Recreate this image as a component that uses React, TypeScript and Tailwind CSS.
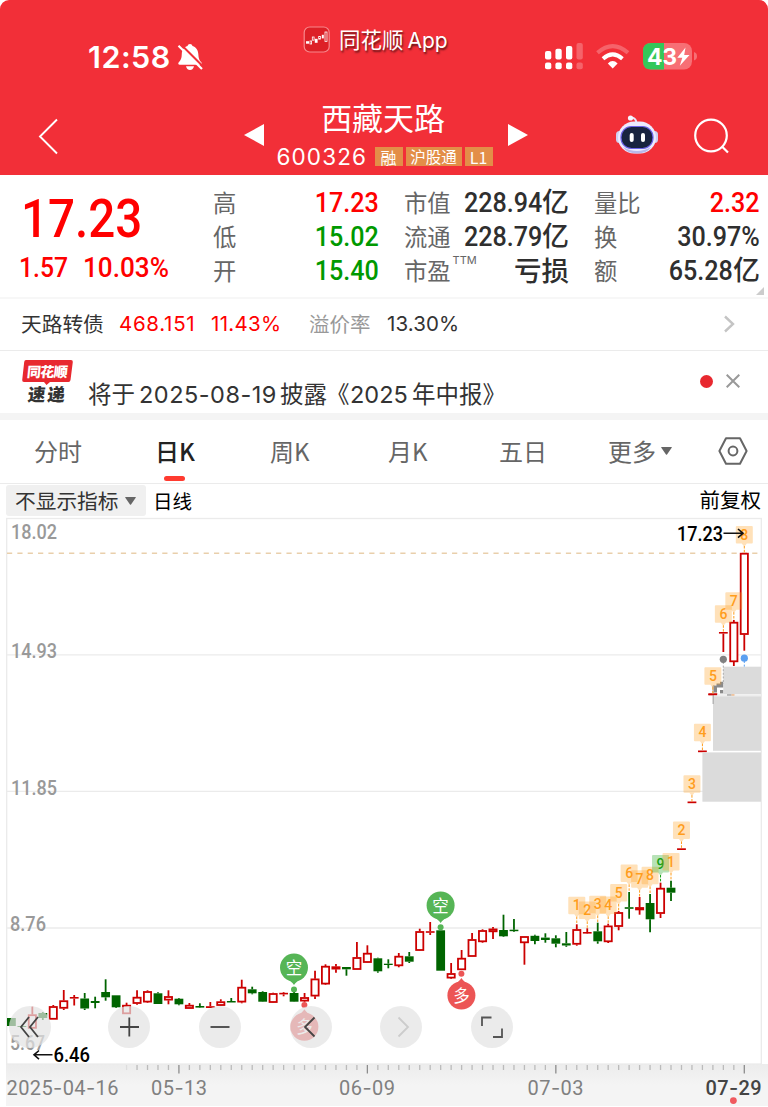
import type { ReactNode } from "react";

// [body top, body bottom, high, low, up]
type Candle = [number, number, number, number, boolean];

const candles: Candle[] = [
    [1018, 1026, 1018, 1026, false],
    [1026, 1027, 1025, 1027, false],
    [1014.5, 1028.5, 1006.7, 1028.5, true],
    [1013, 1018, 1012, 1020, false],
    [1006.3, 1019.5, 1005, 1019.5, true],
    [1000.5, 1008.5, 990, 1010, true],
    [997, 998.6, 995, 1005.5, true],
    [998.5, 1008.5, 993, 1010, false],
    [1001, 1003, 996.7, 1008.3, false],
    [992, 997.3, 979.3, 1000.7, false],
    [995.3, 1007.3, 995.3, 1008, false],
    [1005, 1014, 1002.7, 1014, true],
    [997, 1003.7, 990.3, 1004.7, true],
    [991.3, 1002.3, 990.3, 1003, true],
    [993.3, 1004, 992.3, 1004, false],
    [996.3, 1000.3, 990.3, 1004.3, true],
    [998.7, 1004.3, 998, 1005.3, false],
    [1005, 1008.7, 1003, 1008.7, true],
    [1006, 1007.6, 1003.3, 1008, false],
    [1006.2, 1008, 1002, 1008, true],
    [1001.5, 1005.7, 999.3, 1006, true],
    [1001, 1002.5, 998, 1002.5, false],
    [987, 1002.3, 979.7, 1003.3, true],
    [989.3, 993.3, 986.7, 994.3, false],
    [992, 1001.7, 991.3, 1002, false],
    [993.3, 1002.7, 992.7, 1003, true],
    [992.8, 994.4, 992, 996.3, true],
    [993, 1001.7, 992, 1002, false],
    [997.3, 1001.3, 993, 1002, true],
    [978.7, 996.3, 970.7, 999, true],
    [966, 984.3, 964.3, 985, true],
    [966.5, 969.3, 964, 972.7, true],
    [967, 969.3, 967, 975.7, false],
    [957.3, 969.7, 942, 969.7, true],
    [953, 962.7, 945.3, 963, true],
    [958.3, 971.3, 957.7, 972.7, false],
    [963.7, 965, 959.3, 968.3, false],
    [956, 966, 953, 967.3, true],
    [956.3, 961.7, 952, 963, false],
    [931.3, 950.7, 928.7, 951, true],
    [931.2, 932.8, 922, 935, true],
    [930.3, 970.7, 930.3, 970.7, false],
    [973.3, 978.3, 963, 979, true],
    [958, 970, 950, 970, true],
    [939.3, 956.7, 933, 956.7, true],
    [930.3, 942, 929.3, 942.7, true],
    [928.7, 932, 927, 939, true],
    [930, 936.3, 914.7, 937, false],
    [929.7, 931.2, 919, 932, false],
    [936.3, 943, 936.3, 964.7, true],
    [935.8, 941, 934.7, 944.3, false],
    [937.6, 940, 933.3, 942.7, false],
    [938.3, 943.7, 935.3, 947.3, false],
    [943.3, 945.5, 932, 946.8, false],
    [929.3, 944.5, 924.3, 945.7, true],
    [932, 933.6, 928.3, 934, true],
    [931.3, 941.3, 922.7, 943.7, false],
    [925.7, 942, 923.7, 943, true],
    [912.3, 926.7, 911, 930.3, true],
    [907.2, 908.8, 892, 918.7, false],
    [907.3, 910, 897, 914.7, true],
    [903, 919.3, 894, 932.3, false],
    [888, 913.7, 882.7, 918, true],
    [887.7, 892.7, 880.7, 901, false],
    [848.3, 850, 848.3, 850, true],
    [801.5, 803.2, 801.5, 803.2, true],
    [750.5, 752.2, 750.5, 752.2, true],
    [693.5, 695.2, 693.5, 695.2, true],
    [632, 633.6, 632, 652, true],
    [622, 662, 620, 666, true],
    [553, 634.7, 553, 650.7, true],
];

// [candle index, label, top of the tag]
const tags: [number, string, number][] = [
    [54, "1", 896.7],
    [55, "2", 901.5],
    [56, "3", 895.7],
    [57, "4", 896.5],
    [58, "5", 884],
    [59, "6", 864.5],
    [60, "7", 870.2],
    [61, "8", 866.7],
    [62, "9", 855],
    [63, "1", 853],
    [64, "2", 821.5],
    [65, "3", 775.2],
    [66, "4", 723.7],
    [67, "5", 667.2],
    [68, "6", 605.3],
    [69, "7", 592.2],
    [70, "8", 526],
];

const candleX = (i: number) => 11.4 + i * 10.47;

const CandleMark = ({ i, data }: { i: number; data: Candle }) => {
    const [top, bottom, high, low, up] = data;
    const x = candleX(i);
    const color = up ? "#cc0000" : "#006400";
    const hollow = up && bottom - top > 2;
    return (
        <g stroke={color} strokeWidth={1.8}>
            {high < top && <line x1={x} x2={x} y1={high} y2={top} />}
            {low > bottom && <line x1={x} x2={x} y1={bottom} y2={low} />}
            {hollow ? (
                <rect x={x - 3.6} y={top + 0.7} width={7.2} height={Math.max(bottom - top - 1.4, 1.4)} fill="#fff" />
            ) : (
                <rect x={x - 4.4} y={top} width={8.8} height={bottom - top} fill={color} stroke="none" />
            )}
        </g>
    );
};

const Tag = ({ i, label, y }: { i: number; label: string; y: number }) => {
    const x = candleX(i);
    const color = label === "9" ? "#16a016" : "#ff9d1c";
    return (
        <g>
            <path
                d={`M${x - 7.5} ${y}h15q1 0 1 1v15.5q0 1 -1 1h-5l-2.5 3.2l-2.5 -3.2h-5q-1 0 -1 -1v-15.5q0 -1 1 -1z`}
                fill={color}
                fillOpacity={0.31}
            />
            <line x1={x} x2={x} y1={y + 20} y2={candles[i][2]} stroke={color} strokeWidth={1} strokeDasharray="2.5 1.3" />
            <text x={x} y={y + 13.6} textAnchor="middle" fontSize={14} fontWeight={500} fill={color}>
                {label}
            </text>
        </g>
    );
};

const Signal = ({ x, y, down, label }: { x: number; y: number; down?: boolean; label: string }) => {
    const color = down ? "#56b556" : "#ec5555";
    const s = down ? 1 : -1;
    return (
        <g fill={color}>
            <circle cx={x} cy={y} r={14} />
            <path d={`M${x - 9} ${y + 10 * s}Q${x - 2} ${y + 14 * s} ${x} ${y + 17.5 * s}Q${x + 2} ${y + 14 * s} ${x + 9} ${y + 10 * s}z`} />
            <circle cx={x} cy={y + 21.8 * s} r={3} />
            <text x={x} y={y + 6} textAnchor="middle" fontSize={16.5} fill="#fff" className="font-['Noto_Sans_CJK_SC',sans-serif]">
                {label}
            </text>
        </g>
    );
};

const DateLabel = ({ x, width, children, dark }: { x: number; width: number; children: string; dark?: boolean }) => (
    <text x={x} y={1095} textLength={width} fontSize={20} fontWeight={dark ? 500 : 400} fill={dark ? "#444" : "#808080"}>
        {children.split("-").map((part, i) => (
            <tspan key={i}>
                {i > 0 && <tspan className="font-[Inter,sans-serif]">-</tspan>}
                {part}
            </tspan>
        ))}
    </text>
);

const Chart = () => (
    <svg viewBox="0 517 768 590" className="block h-[590px] w-[768px] font-[Roboto,sans-serif]">
        <defs>
            <linearGradient id="axis" x1="0" x2="0" y1="0" y2="1">
                <stop offset="0" stopColor="#ececec" />
                <stop offset="0.5" stopColor="#f4f4f4" />
            </linearGradient>
        </defs>
        <rect x={6} y={1064} width={762} height={42} fill="url(#axis)" />
        <g stroke="#ebebeb" strokeWidth={1.3}>
            <rect x={6.7} y={518.5} width={754.6} height={545.5} fill="#fff" />
            <path d="M7 654.8H761M7 791.3H761M7 928H761" />
        </g>
        <line x1={7} x2={761} y1={553.3} y2={553.3} stroke="#e9cfab" strokeWidth={1.5} strokeDasharray="5.2 5.15" />
        <g fontSize={19.5} fontWeight={500} fill="#999">
            <text x={11} y={538.7} textLength={46} lengthAdjust="spacingAndGlyphs">18.02</text>
            <text x={11} y={657.7} textLength={46} lengthAdjust="spacingAndGlyphs">14.93</text>
            <text x={11} y={794.5} textLength={46} lengthAdjust="spacingAndGlyphs">11.85</text>
            <text x={10} y={931.3} textLength={36} lengthAdjust="spacingAndGlyphs">8.76</text>
            <text x={10} y={1050} textLength={35} lengthAdjust="spacingAndGlyphs">5.67</text>
        </g>
        {candles.map((c, i) => (
            <CandleMark key={i} i={i} data={c} />
        ))}

        {/* masked fund flow area */}
        <path d="M712.8 692.5V685.5H716.5V683.5H720V681.7H723.4V687.5H717V692.5z" fill="#8a8a8a" />
        <rect x={720} y={690} width={3.4} height={3.4} fill="#8a8a8a" />
        <g fill="#dbdbdb">
            <rect x={723.3} y={666.7} width={37.7} height={27.4} />
            <rect x={713} y={696.2} width={48} height={54.6} />
            <rect x={702.4} y={752.4} width={58.6} height={49.3} />
        </g>
        <rect x={713} y={694.2} width={48} height={2} fill="#eee" />
        <rect x={727} y={694.2} width={4.5} height={1.5} fill="#aaa" />
        <rect x={731.5} y={694.2} width={3} height={1.5} fill="#f0b98a" />
        <rect x={712.5} y={686} width={1.5} height={18} fill="#b5b5b5" />
        <rect x={708.3} y={693.5} width={8.8} height={1.7} fill="#cc0000" />
        <line x1={723.3} x2={723.3} y1={662} y2={684} stroke="#aaa" strokeDasharray="2 1.6" />
        <circle cx={723.3} cy={659.3} r={3.6} fill="#808080" />
        <line x1={744.3} x2={744.3} y1={661} y2={667} stroke="#5a9ff0" strokeDasharray="2 1.6" />
        <circle cx={744.3} cy={658.2} r={3.6} fill="#5a9ff0" />

        {tags.map(([i, label, y]) => (
            <Tag key={i} i={i} label={label} y={y} />
        ))}
        <Signal x={294} y={967.6} down label="空" />
        <Signal x={304.4} y={1026.8} label="多" />
        <Signal x={440.6} y={905.5} down label="空" />
        <Signal x={461.4} y={995.5} label="多" />

        <g fontSize={20} fontWeight={500} fill="#000">
            <text x={677} y={540.6} textLength={46} lengthAdjust="spacingAndGlyphs">17.23</text>
            <text x={53.5} y={1061.8} textLength={36.5} lengthAdjust="spacingAndGlyphs">6.46</text>
        </g>
        <path d="M723.5 533.3H743M738 529L743 533.3L738 537.6M52.5 1054.8H34M39 1050.5L34 1054.8L39 1059.1" fill="none" stroke="#111" strokeWidth={1.6} />

        {/* time axis */}
        {candles.map((_, i) => {
            if (i < 11) return null;
            const major = (i - 16) % 18 === 0;
            return (
                <line
                    key={i}
                    x1={candleX(i)}
                    x2={candleX(i)}
                    y1={1065}
                    y2={major ? 1073.5 : 1070}
                    stroke={major ? "#8c8c8c" : i === 11 ? "#ddd" : "#bbb"}
                    strokeWidth={1.3}
                />
            );
        })}
        <DateLabel x={6.5} width={112}>2025-04-16</DateLabel>
        <DateLabel x={151} width={56}>05-13</DateLabel>
        <DateLabel x={339} width={56}>06-09</DateLabel>
        <DateLabel x={527.5} width={56}>07-03</DateLabel>
        <DateLabel x={705.5} width={56} dark>07-29</DateLabel>
        <circle cx={733.4} cy={1100.6} r={3.4} fill="#f05a5f" />
    </svg>
);

const chartButtons = [
    { left: "left-[9px]", path: "M20 11L12 21L20 31M29 11L21 21L29 31", color: "#444" },
    { left: "left-[108px]", path: "M12 21H31M21.3 11.5V30.5", color: "#444" },
    { left: "left-[199px]", path: "M11.5 21H30.5", color: "#444" },
    { left: "left-[290px]", path: "M24.5 11.5L15 21L24.5 30.5", color: "#444" },
    { left: "left-[380px]", path: "M18.5 11.5L28 21L18.5 30.5", color: "#ccc" },
    { left: "left-[471px]", path: "M11 20V11.5H20.5M31 22.5V31H22", color: "#555" },
];

const ChartButtons = () => (
    <>
        {chartButtons.map((b) => (
            <button key={b.left} className={`absolute top-[488.5px] size-[42px] rounded-full bg-[#e2e2e2]/70 ${b.left}`}>
                <svg viewBox="0 0 42 42" className="size-full" fill="none" stroke={b.color} strokeWidth={1.8}>
                    <path d={b.path} />
                </svg>
            </button>
        ))}
    </>
);

const StatusBar = () => (
    <div className="flex h-[84px] items-start text-white">
        <div className="mt-[37px] ml-[88px] w-[88px] whitespace-nowrap font-[Inter,sans-serif] text-[30.5px] leading-[40px] font-semibold tracking-[0.5px]">12:58</div>
        <svg className="mt-[42px] h-[30px] w-[28px]" viewBox="176 42 28 30" fill="#fff">
            <path d="M190 44c1.3 0 2.2 .8 2.5 1.9c4 1.2 5.6 4.5 5.8 8.1c.2 4.5 1.2 6.5 3 8.3c.8 1 .4 2.5 -1 2.5h-20.5c-1.5 0 -2 -1.5 -1 -2.5c1.9 -1.8 2.9 -3.9 3 -8.3c.1 -3.6 1.7 -6.9 5.7 -8.1c.3 -1.1 1.2 -1.9 2.5 -1.9z" />
            <path d="M186 66.3h8q-.8 3.7 -4 3.7t-4 -3.7z" />
            <path d="M180.5 44L204 67.5" stroke="#f22f38" strokeWidth={2} />
            <path d="M178.5 45.8L202 69" stroke="#fff" strokeWidth={2.2} />
        </svg>
        <svg className="mt-[26px] ml-[99px] size-[27px]" viewBox="303 26 27 27">
            <rect x={304.2} y={27} width={25} height={25} rx={5.5} fill="#dd2027" stroke="#f7888c" strokeWidth={1.2} />
            <g fill="#fff">
                <rect x={306} y={41.2} width={3} height={2.5} />
                <rect x={314.8} y={38.8} width={2.8} height={4} />
                <rect x={321.8} y={34.8} width={2} height={3.6} />
            </g>
            <g fill="none" stroke="#fff" strokeWidth={0.8}>
                <rect x={310} y={41} width={1.6} height={3} />
                <rect x={312.3} y={37} width={1.8} height={3.2} />
                <rect x={318.7} y={36.5} width={1.8} height={2.6} />
                <rect x={325} y={32} width={2} height={9.5} />
            </g>
        </svg>
        <div className="mt-[24px] ml-[9px] flex w-[204px] items-baseline gap-[4px] whitespace-nowrap font-[Inter,'Noto_Sans_CJK_SC',sans-serif] text-[21.5px] leading-[32px] [text-shadow:1px_2px_2px_rgba(0,0,0,0.6)]">
            <span>同花顺</span>
            <span className="text-[21px]">App</span>
        </div>
        <svg className="mt-[40px] h-[32px] w-[156px]" viewBox="543 40 156 32">
            <g fill="#fff">
                <rect x={545} y={51} width={6.3} height={8.5} rx={2} />
                <rect x={555.4} y={48.7} width={6.3} height={10.8} rx={2} />
                <rect x={566} y={46} width={6.3} height={13.5} rx={2} />
                <rect x={545} y={62.5} width={6.3} height={6.8} rx={2} />
                <rect x={555.4} y={62.5} width={6.3} height={6.8} rx={2} />
                <rect x={566} y={62.5} width={6.3} height={6.8} rx={2} />
                <g opacity={0.25}>
                    <rect x={576.5} y={43} width={6.3} height={16.5} rx={2} />
                    <rect x={576.5} y={62.5} width={6.3} height={6.8} rx={2} />
                </g>
                <path d="M612.7 68.5L607.8 63.4Q612.7 58.8 617.6 63.4Z" />
            </g>
            <g fill="none" stroke="#fff" strokeWidth={4}>
                <path d="M603 58.7Q612.7 50.2 622.4 58.7" />
                <path d="M597.5 52.8Q612.7 39.5 628 52.8" opacity={0.25} />
            </g>
            <rect x={643} y={43} width={49} height={26.5} rx={8} fill="#f76f75" />
            <path d="M664 43h-13q-8 0 -8 8v10.5q0 8 8 8h13z" fill="#34c759" />
            <path d="M694 52q3 1 3 4.2t-3 4.2z" fill="#f76f75" />
            <text x={647} y={64.8} fontSize={23} fontWeight={700} fill="#fff" textLength={30} className="font-[Inter,sans-serif]">43</text>
            <path d="M685.5 47.5L677.3 57.8h5l-2.5 8L689.5 55h-5.3z" fill="#fff" />
        </svg>
    </div>
);

const Robot = () => (
    <svg className="h-[42px] w-[44px]" viewBox="0 0 44 42">
        <path d="M15 4q6 -1 6.5 5" fill="none" stroke="#e8e4f8" strokeWidth={2} />
        <circle cx={15.5} cy={4} r={2.6} fill="#f6f4ff" />
        <rect x={1} y={17} width={7} height={12} rx={3.5} fill="#cfd0f0" />
        <rect x={36} y={17} width={7} height={12} rx={3.5} fill="#cfd0f0" />
        <rect x={3} y={7.5} width={38} height={32} rx={16} fill="#eceaff" />
        <path d="M8 33q14 8 28 0q-4 6.5 -14 6.5t-14 -6.5z" fill="#b9b8ea" />
        <rect x={6} y={12.5} width={32} height={22} rx={10.5} fill="#18233f" stroke="#6b62e8" strokeWidth={1.2} />
        <rect x={14.7} y={19} width={4} height={9} rx={2} fill="#fff" />
        <rect x={26} y={19} width={4} height={9} rx={2} fill="#fff" />
    </svg>
);

const Header = () => (
    <header className="h-[175px] rounded-t-[9px] bg-[#f22f38]">
        <StatusBar />
        <div className="flex h-[91px] text-white">
            <svg className="mt-[34px] ml-[38px] h-[37px] w-[20px]" viewBox="0 0 20 37" fill="none" stroke="#fff" strokeWidth={1.9}>
                <path d="M19 1.5L2 18.5L19 35.5" />
            </svg>
            <svg className="mt-[40px] ml-[186px] h-[22px] w-[20px]" viewBox="0 0 20 22" fill="#fff">
                <path d="M20 0V22L0 11z" />
            </svg>
            <div className="flex w-[244px] flex-col items-center pr-[4px] font-['Noto_Sans_CJK_SC',sans-serif]">
                <h1 className="mt-[13px] mr-[2px] h-[43px] text-[31px] leading-[40px] -tracking-[0.1px]">西藏天路</h1>
                <div className="flex items-center gap-[3px]">
                    <span className="mt-px w-[96px] pl-px font-[Inter,sans-serif] text-[22.5px] leading-[32px] tracking-[1.1px]">600326</span>
                    <span className="flex h-[19px] w-[28px] items-center justify-center bg-[#e38e48] text-[16px]">融</span>
                    <span className="flex h-[19px] w-[56px] items-center justify-center bg-[#e38e48] text-[15.5px]">沪股通</span>
                    <span className="flex h-[19px] w-[28px] items-center justify-center bg-[#e38e48] text-[16px]">L1</span>
                </div>
            </div>
            <svg className="mt-[40px] h-[22px] w-[20px]" viewBox="0 0 20 22" fill="#fff">
                <path d="M0 0V22L20 11z" />
            </svg>
            <div className="mt-[30px] ml-[87px]">
                <Robot />
            </div>
            <svg className="mt-[34px] ml-[34px] h-[37px] w-[37px]" viewBox="0 0 37 37" fill="none" stroke="#fff" strokeWidth={2.2}>
                <circle cx={18} cy={17.5} r={15.8} />
                <path d="M29 28.5L35 34.5" />
            </svg>
        </div>
    </header>
);

const Row = ({ label, children, color = "text-[#2f2f2f]", sup }: { label: string; children: ReactNode; color?: string; sup?: string }) => (
    <div className="flex h-[34px] items-center justify-between whitespace-nowrap">
        <span className="mb-[3px] flex text-[23.3px] leading-[34px] text-[#666]">
            {label}
            {sup && <sup className="top-[2px] ml-[2px] font-[Inter,sans-serif] text-[11px] leading-none">{sup}</sup>}
        </span>
        <span className={`flex items-center font-medium ${color}`}>{children}</span>
    </div>
);

const Num = ({ children }: { children: string }) => (
    <span className="inline-block origin-right scale-x-[0.93] font-[Roboto,sans-serif] text-[27px] leading-[34px]">{children}</span>
);

const Yi = () => <span className="mb-[4px] text-[27px] leading-[26px]">亿</span>;

const Quote = () => (
    <section className="flex h-[124px] border-b-2 border-[#f7f7f7] pt-[11px]">
        <div className="w-[213px] whitespace-nowrap font-[Roboto,sans-serif] font-medium text-[#ff0000]">
            <div className="ml-[21px] h-[67px] origin-left scale-x-[0.88] text-[54px] leading-[66px]">17.23</div>
            <div className="ml-[19px] flex text-[27.5px] leading-[30px]">
                <span className="w-[64px] origin-left scale-x-[0.9]">1.57</span>
                <span className="origin-left scale-x-[0.95]">10.03%</span>
            </div>
        </div>
        <div className="w-[166px]">
            <Row label="高" color="text-[#ff0000]"><Num>17.23</Num></Row>
            <Row label="低" color="text-[#009900]"><Num>15.02</Num></Row>
            <Row label="开" color="text-[#009900]"><Num>15.40</Num></Row>
        </div>
        <div className="ml-[25px] w-[165px]">
            <Row label="市值"><Num>228.94</Num><Yi /></Row>
            <Row label="流通"><Num>228.79</Num><Yi /></Row>
            <Row label="市盈" sup="TTM"><span className="mb-[4px] text-[27.5px] leading-[26px]">亏损</span></Row>
        </div>
        <div className="ml-[25px] w-[166px]">
            <Row label="量比" color="text-[#ff0000]"><Num>2.32</Num></Row>
            <Row label="换"><Num>30.97%</Num></Row>
            <Row label="额"><Num>65.28</Num><Yi /></Row>
        </div>
        <svg className="mt-auto mb-[2px] -ml-[4px] size-[8px]" viewBox="0 0 8 8" fill="#ccc">
            <path d="M8 0V8H0z" />
        </svg>
    </section>
);

const BondRow = () => (
    <section className="flex h-[52px] items-center border-b border-[#ebebeb] pl-[21px] whitespace-nowrap text-[20.7px] text-[#333]">
        <span className="mb-[2px] w-[98px]">天路转债</span>
        <span className="w-[92px] font-[Inter,sans-serif] text-[20.5px] tracking-[0.7px] text-[#ff0000]">468.151</span>
        <span className="w-[98px] font-[Inter,sans-serif] text-[20.5px] tracking-[0.3px] text-[#ff0000]">11.43%</span>
        <span className="mb-[2px] w-[78px] text-[20.5px] text-[#999]">溢价率</span>
        <span className="w-[336px] font-[Inter,sans-serif] text-[20.5px] tracking-[0.1px]">13.30%</span>
        <svg className="mb-[2px] h-[18px] w-[12px]" viewBox="0 0 12 18" fill="none" stroke="#c4c4c4" strokeWidth={2.4}>
            <path d="M2 1.5L10 9L2 16.5" />
        </svg>
    </section>
);

const NewsRow = () => (
    <section className="flex h-[62px] pl-[22px] text-[#333]">
        <div className="relative w-[66px] pt-[9px]">
            <svg className="absolute top-[9px] left-0 h-[26px] w-[52px]" viewBox="0 0 52 26" fill="#e8282f">
                <path d="M4 0H49q2 0 1.8 2L48.5 20q-.3 2 -2 2H28L24.5 25L22 22H2q-2 0 -1.8 -2L2.2 2Q2.4 0 4 0z" />
            </svg>
            <div className="relative ml-[5px] h-[23px] -skew-x-6 text-[14px] leading-[22px] font-black whitespace-nowrap -tracking-[0.6px] text-white">同花顺</div>
            <div className="relative ml-[6px] -skew-x-6 text-[17.5px] leading-[22px] font-black tracking-[2px]">速递</div>
        </div>
        <div className="mt-[26px] flex h-[36px] w-[612px] items-center whitespace-nowrap text-[23.5px]">
            <span className="mb-[2px] w-[51px]">将于</span>
            <span className="w-[141px] font-[Inter,sans-serif] text-[23.5px] tracking-[0.5px]">2025-08-19</span>
            <span className="mb-[2px] w-[46px]">披露</span>
            <span className="mb-[2px] w-[24px]">《</span>
            <span className="w-[62px] font-[Inter,sans-serif] text-[23.5px]">2025</span>
            <span className="mb-[2px]">年中报》</span>
        </div>
        <div className="mt-[24px] size-[12.5px] rounded-full bg-[#e8282f]" />
        <svg className="mt-[23px] ml-[13px] size-[14px]" viewBox="0 0 14 14" fill="none" stroke="#999" strokeWidth={2}>
            <path d="M0.7 0.7L13.3 13.3M13.3 0.7L0.7 13.3" />
        </svg>
    </section>
);

const Caret = ({ className }: { className: string }) => (
    <svg className={className} viewBox="0 0 11 8" fill="#666">
        <path d="M0.5 0H10.5q.5 .3 .2 .8L6 7.6q-.5 .5 -1 0L.3 .8Q0 .3 .5 0z" />
    </svg>
);

const Tabs = () => (
    <nav className="flex h-[64px] items-center border-b border-[#ebebeb] pb-[2px] pl-[34px] text-[24px] whitespace-nowrap text-[#666]">
        <span className="w-[121px]">分时</span>
        <span className="relative w-[115px] font-medium text-[#222]">
            日K
            <span className="absolute top-[43px] left-[9px] h-[5px] w-[21px] rounded-full bg-[#ff3b30]" />
        </span>
        <span className="w-[118px]">周K</span>
        <span className="w-[111px]">月K</span>
        <span className="w-[109px]">五日</span>
        <span className="flex w-[110px] items-center gap-[5px]">
            更多
            <Caret className="h-[8px] w-[11px]" />
        </span>
        <svg className="h-[28px] w-[30px]" viewBox="0 0 30 28" fill="none" stroke="#666" strokeWidth={2}>
            <path d="M8 1.3H22L28.6 14L22 26.7H8L1.4 14z" strokeLinejoin="round" />
            <circle cx={15} cy={14} r={4.4} />
        </svg>
    </nav>
);

const IndicatorBar = () => (
    <div className="flex h-[33px] items-center pr-[7px] pl-[6px] text-[20.5px] whitespace-nowrap text-black">
        <div className="flex h-[31px] w-[140px] items-center gap-[7px] rounded-[3px] bg-[#f0f0f0] pl-[9px] text-[20.7px] text-[#333]">
            不显示指标
            <Caret className="h-[8px] w-[11px]" />
        </div>
        <span className="ml-[7px] text-[19.5px]">日线</span>
        <span className="mb-[2px] ml-auto">前复权</span>
    </div>
);

const App = () => {
    return (
        <div className="h-[1107px] w-[768px] overflow-hidden bg-white font-['Noto_Sans_CJK_SC',sans-serif]">
            <Header />
            <Quote />
            <BondRow />
            <NewsRow />
            <div className="h-[7px] bg-[#f4f4f4]" />
            <Tabs />
            <IndicatorBar />
            <div className="relative">
                <Chart />
                <ChartButtons />
            </div>
        </div>
    );
};

export default App;
